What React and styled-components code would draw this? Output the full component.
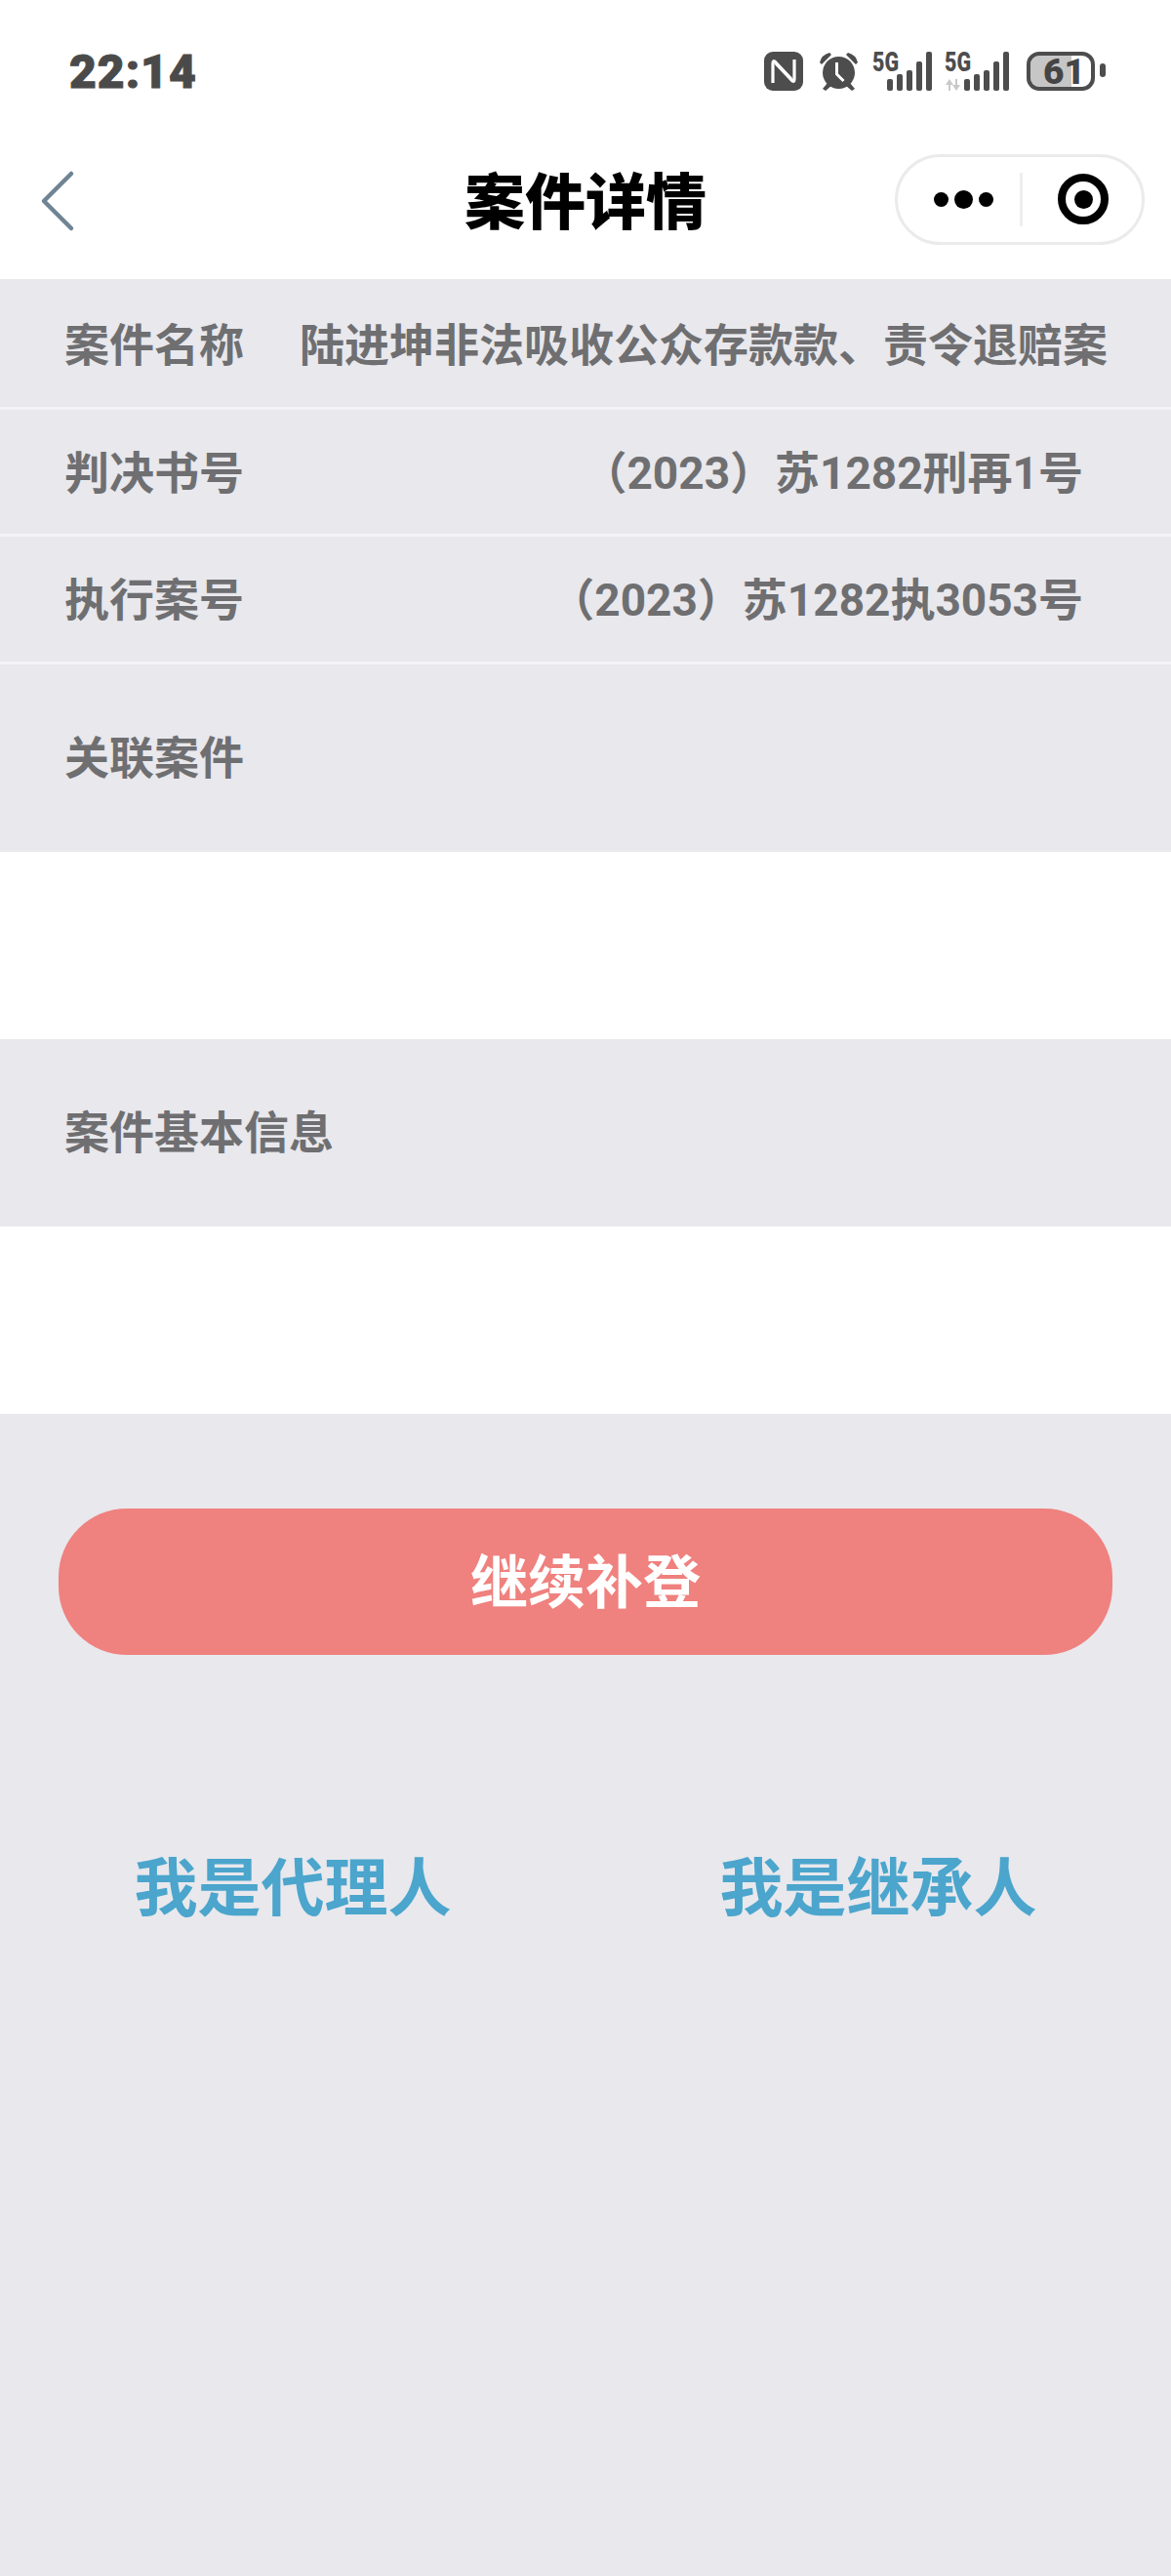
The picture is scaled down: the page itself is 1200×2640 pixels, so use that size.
import React from "react";
import styled, { createGlobalStyle } from "styled-components";

const Global = createGlobalStyle`
  html, body { margin: 0; padding: 0; background: #e8e8ed; }
  * { box-sizing: border-box; }
  body { font-family: Roboto, "Noto Sans CJK SC", sans-serif; }
`;

const Page = styled.div`
  width: 1200px;
  height: 2640px;
  background: #e8e8ed;
  overflow: hidden;
`;

const Header = styled.header`
  background: #ffffff;
  height: 286px;
`;

const StatusBar = styled.div`
  height: 125px;
  display: flex;
  justify-content: space-between;
  align-items: flex-start;
  padding: 53px 67px 0 71px;
`;

const Time = styled.div`
  font-family: Roboto, sans-serif;
  font-weight: 900;
  font-size: 48px;
  line-height: 42px;
  letter-spacing: 1px;
  color: #4a4a4a;
  -webkit-text-stroke: 1px #4a4a4a;
`;

const StatusIcons = styled.div`
  display: flex;
  align-items: flex-start;
`;

const Glyph = styled.svg`
  display: block;
  flex: none;
  overflow: visible;
  margin-left: ${(p) => p.$gap || 0}px;
`;

const Nav = styled.nav`
  height: 161px;
  display: grid;
  grid-template-columns: 1fr auto 1fr;
  align-items: center;
  padding: 0 27px;
`;

const BackIcon = styled.svg`
  display: block;
  margin-left: 13px;
`;

const Title = styled.h1`
  margin: 0 0 6px;
  font-family: "Noto Sans CJK SC", sans-serif;
  font-weight: 900;
  font-size: 62px;
  line-height: 80px;
  color: #000000;
`;

const Capsule = styled.div`
  justify-self: end;
  width: 256px;
  height: 93px;
  margin-bottom: 3px;
  border: 3px solid #ebebeb;
  border-radius: 47px;
  display: flex;
  align-items: center;
`;

const Dots = styled.div`
  flex: none;
  width: 125px;
  display: flex;
  justify-content: center;
  align-items: center;
  gap: 6px;
  padding-left: 9px;
`;

const Dot = styled.span`
  width: ${(p) => p.$size}px;
  height: ${(p) => p.$size}px;
  border-radius: 50%;
  background: #000;
`;

const Divider = styled.span`
  flex: none;
  width: 3px;
  height: 55px;
  background: #eeeeee;
`;

const Target = styled.div`
  margin-left: 36px;
  width: 52px;
  height: 52px;
  border: 8px solid #000;
  border-radius: 50%;
  display: flex;
  align-items: center;
  justify-content: center;
  &::after {
    content: "";
    width: 19px;
    height: 19px;
    border-radius: 50%;
    background: #000;
  }
`;

const Row = styled.div`
  box-sizing: content-box;
  height: 127.5px;
  padding-top: ${(p) => (p.$first ? 3 : 0)}px;
  border-bottom: 3px solid #f4f4f7;
  display: flex;
  align-items: center;
  justify-content: space-between;
  padding-left: 66px;
  padding-right: ${(p) => p.$inset}px;
`;

const Label = styled.span`
  font-family: Roboto, "Noto Sans CJK SC", sans-serif;
  font-weight: 700;
  font-size: 46px;
  line-height: 60px;
  color: #6f6f71;
  white-space: nowrap;
  margin-top: ${(p) => (p.$section ? 0 : 3)}px;
`;

const Section = styled.div`
  height: 192px;
  display: flex;
  align-items: center;
  padding-left: 66px;
`;

const Blank = styled.div`
  height: 192px;
  background: #ffffff;
`;

const Actions = styled.div`
  padding: 97px 60px 0;
`;

const PrimaryButton = styled.button`
  display: block;
  width: 100%;
  height: 150px;
  padding: 0 0 6px;
  border: 0;
  border-radius: 70px;
  background: #ef817e;
  color: #ffffff;
  font-family: "Noto Sans CJK SC", sans-serif;
  font-weight: 700;
  font-size: 59px;
  line-height: 70px;
`;

const Links = styled.div`
  display: grid;
  grid-template-columns: 1fr 1fr;
  margin: 189px -60px 0;
`;

const RoleLink = styled.a`
  text-align: center;
  font-family: "Noto Sans CJK SC", sans-serif;
  font-weight: 700;
  font-size: 65px;
  line-height: 90px;
  color: #4ba5cc;
`;

const Signal = ({ gap, offset, arrows }) => (
  <Glyph $gap={gap} width={offset + 46} height="40" viewBox={`0 0 ${offset + 46} 40`}>
    <text x="0" y="20" fontFamily="Roboto, sans-serif" fontWeight="900" fontSize="28" fill="#4d4d4d" textLength="27" lengthAdjust="spacingAndGlyphs">5G</text>
    {arrows && <path d="M5 28 1 34h3v6h2v-6h3zM11 28v6H8l4 6 4-6h-3v-6z" fill="#c9c9c9" />}
    {[[0, 28], [10, 23], [20, 19], [30, 10], [40, 0]].map(([x, y]) => (
      <rect key={x} x={offset + x} y={y} width="6" height={40 - y} rx="2" fill="#4d4d4d" />
    ))}
  </Glyph>
);

export default function App() {
  return (
    <Page>
      <Global />
      <Header>
        <StatusBar>
          <Time>22:14</Time>
          <StatusIcons>
            <Glyph width="40" height="40" viewBox="0 0 40 40">
              <rect width="40" height="40" rx="9" fill="#4d4d4d" />
              <path d="M9 32V12q0-4 3-1l16 17" fill="none" stroke="#fff" strokeWidth="3.200" />
              <path d="M31 8v20q0 4-3 1L12 12" fill="none" stroke="#fff" strokeWidth="3.200" />
            </Glyph>
            <Glyph $gap={16} width="41" height="40" viewBox="0 0 41 40">
              <circle cx="20.500" cy="21.500" r="16.500" fill="#4d4d4d" />
              <path d="M1 11Q3 3 11 1L13 3 3 13ZM40 11Q38 3 30 1L28 3 38 13Z" fill="#4d4d4d" />
              <path d="M9 32 4 38l3 2 6-5ZM32 32l5 6-3 2-6-5Z" fill="#4d4d4d" />
              <path d="M18.500 11v12l7 7" fill="none" stroke="#fff" strokeWidth="3" />
            </Glyph>
            <Signal gap={14} offset={15} />
            <Signal gap={13} offset={20} arrows />
            <Glyph $gap={18} width="81" height="40" viewBox="0 0 81 40">
              <path d="M13 4h33v32H13a10 10 0 0 1-9-9V13a10 10 0 0 1 9-9Z" fill="#c6c6c6" />
              <rect x="2" y="2" width="66" height="36" rx="11" fill="none" stroke="#4d4d4d" strokeWidth="4" />
              <rect x="75" y="12" width="6" height="14" rx="3" fill="#4d4d4d" />
              <text x="17" y="33" fontFamily="Roboto, sans-serif" fontWeight="900" fontSize="37" fill="#454545">61</text>
            </Glyph>
          </StatusIcons>
        </StatusBar>
        <Nav>
          <BackIcon width="40" height="66" viewBox="0 0 40 66">
            <path d="M33 5 5 33l28 28" fill="none" stroke="#6f8494" strokeWidth="4.500" strokeLinecap="round" strokeLinejoin="round" />
          </BackIcon>
          <Title>案件详情</Title>
          <Capsule>
            <Dots>
              <Dot $size={15} />
              <Dot $size={19} />
              <Dot $size={15} />
            </Dots>
            <Divider />
            <Target />
          </Capsule>
        </Nav>
      </Header>
      <Row $first $inset={65}>
        <Label>案件名称</Label>
        <Label>陆进坤非法吸收公众存款款、责令退赔案</Label>
      </Row>
      <Row $inset={90}>
        <Label>判决书号</Label>
        <Label>（2023）苏1282刑再1号</Label>
      </Row>
      <Row $inset={90}>
        <Label>执行案号</Label>
        <Label>（2023）苏1282执3053号</Label>
      </Row>
      <Section>
        <Label $section>关联案件</Label>
      </Section>
      <Blank />
      <Section>
        <Label $section>案件基本信息</Label>
      </Section>
      <Blank />
      <Actions>
        <PrimaryButton>继续补登</PrimaryButton>
        <Links>
          <RoleLink>我是代理人</RoleLink>
          <RoleLink>我是继承人</RoleLink>
        </Links>
      </Actions>
    </Page>
  );
}
